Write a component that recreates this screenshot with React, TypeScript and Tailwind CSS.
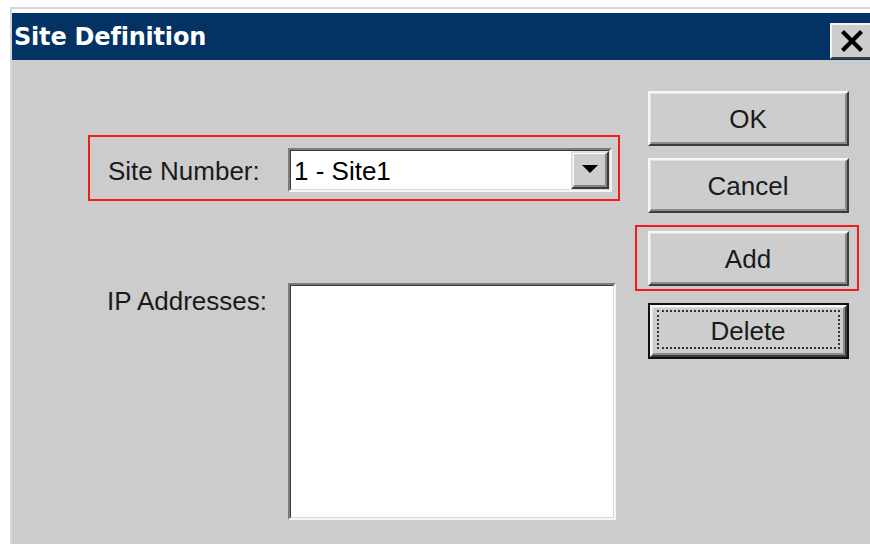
import React from "react";

const ui = { fontFamily: '"Liberation Sans", Arial, sans-serif' };

function RaisedButton({ label, isDefault = false }: { label: string; isDefault?: boolean }) {
  const face = (
    <div className="h-full w-full border-t-2 border-l-2 border-b-2 border-r-2 border-t-[#f7f7f7] border-l-[#f7f7f7] border-b-[#3c3c3c] border-r-[#3c3c3c]">
      <div className="relative flex h-full w-full items-center justify-center border-t border-l border-b-2 border-r-2 border-t-[#e2e2e2] border-l-[#e2e2e2] border-b-[#8a8a8a] border-r-[#8a8a8a] bg-[#cdcdcd] text-[26px] leading-none text-[#1a1a1a]">
        {isDefault && (
          <div className="absolute left-[4px] right-[3px] top-[2px] bottom-[4px] border-2 border-dotted border-[#333]" />
        )}
        <span className="pt-[1px]">{label}</span>
      </div>
    </div>
  );
  if (isDefault) {
    return <div className="h-[56px] w-[201px] border-2 border-[#111]">{face}</div>;
  }
  return <div className="h-[55px] w-[201px]">{face}</div>;
}

function Sunken({ className, children }: { className: string; children?: React.ReactNode }) {
  return (
    <div className={`border-2 border-t-[#7c7c7c] border-l-[#7c7c7c] border-b-[#f6f6f6] border-r-[#f6f6f6] ${className}`}>
      <div className="flex h-full w-full border-t border-l border-b border-r border-t-[#3a3a3a] border-l-[#3a3a3a] border-b-[#dadada] border-r-[#dadada] bg-white">
        {children}
      </div>
    </div>
  );
}

export default function App() {
  return (
    <div className="h-[544px] w-[870px] overflow-hidden bg-white pl-[10px] pt-[7px]" style={ui}>
      <div className="flex h-[600px] w-[900px] flex-col border-t-2 border-l-2 border-[#d6d6d6]">
        <div className="h-[4px] bg-white" />
        {/* title bar */}
        <div className="flex h-[47px] items-center bg-[#033264] pl-[2px]">
          <span
            className="w-[200px] text-[24px] font-bold leading-none tracking-[-0.2px] text-white"
            style={{ fontFamily: '"DejaVu Sans", Verdana, sans-serif' }}
          >
            Site Definition
          </span>
          <div className="ml-[616px] mt-[10px] h-[36px] w-[44px] self-start border-t-2 border-l-2 border-b-2 border-r-2 border-t-[#f4f4f4] border-l-[#f4f4f4] border-b-[#404040] border-r-[#404040] bg-[#cdcdcd]">
            <svg width="40" height="32" viewBox="0 0 40 32">
              <path d="M12 8 L28 24 M28 8 L12 24" stroke="#000" strokeWidth="4.2" strokeLinecap="square" />
            </svg>
          </div>
        </div>

        {/* dialog body */}
        <div className="flex flex-1 bg-[#cccccc] pl-[76px] pt-[31px]">
          <div className="mt-[44px] flex w-[532px] flex-col">
            <div className="flex h-[66px] items-start border-2 border-[#f01c1c] pl-[18px] pt-[11px]">
              <span className="mt-[10px] text-[26px] leading-none text-[#1a1a1a]">Site Number:</span>
              <Sunken className="ml-auto mr-[6px] h-[44px] w-[324px]">
                <span className="flex-1 pl-[3px] pt-[7px] text-[26px] leading-none text-black">1 - Site1</span>
                <div className="h-full w-[38px] border-2 border-t-[#dedede] border-l-[#dedede] border-b-[#3c3c3c] border-r-[#3c3c3c]">
                  <div className="flex h-full w-full items-center justify-center border-t border-l border-b-2 border-r-2 border-t-white border-l-white border-b-[#858585] border-r-[#858585] bg-[#cdcdcd]">
                    <svg width="16" height="9" viewBox="0 0 16 9">
                      <path d="M0 0 H16 L8 8 Z" fill="#000" />
                    </svg>
                  </div>
                </div>
              </Sunken>
            </div>

            <div className="mt-[82px] flex items-start">
              <span className="mt-[5px] w-[179px] text-right text-[26px] leading-none text-[#1a1a1a]">IP Addresses:</span>
              <Sunken className="ml-[21px] h-[237px] w-[328px]" />
            </div>
          </div>

          <div className="ml-[28px] flex flex-col gap-[12px]">
            <RaisedButton label="OK" />
            <RaisedButton label="Cancel" />
            <div className="-ml-[13px] -mr-[10px] border-2 border-[#f01c1c] pb-[3px] pl-[11px] pr-[8px] pt-[4px]">
              <RaisedButton label="Add" />
            </div>
            <RaisedButton label="Delete" isDefault />
          </div>
        </div>
      </div>
    </div>
  );
}
